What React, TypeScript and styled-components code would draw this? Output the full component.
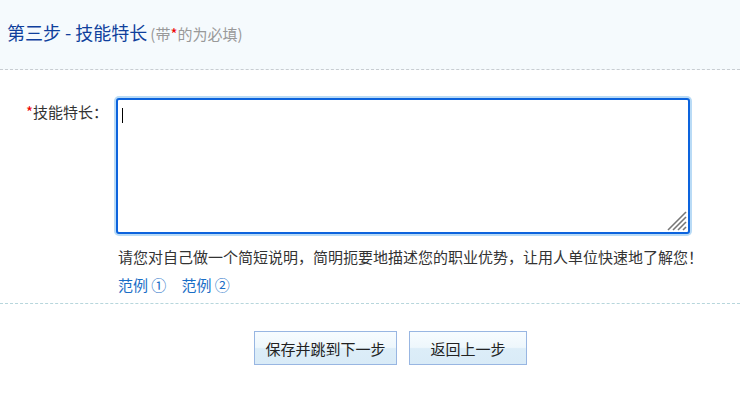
import React from "react";
import styled, { createGlobalStyle } from "styled-components";

const Global = createGlobalStyle`
  html, body { margin: 0; padding: 0; background: #fff; }
  body {
    font-family: "Noto Sans CJK SC", "Noto Sans", sans-serif;
    color: #333;
    text-spacing-trim: space-all;
  }
`;

const Page = styled.div`
  width: 740px;
  height: 407px;
  overflow: hidden;
  background: #fff;
`;

const Header = styled.div`
  height: 70px;
  background: #f5fafd;
  border-bottom: 1px dashed #c8cdd2;
  display: flex;
  align-items: center;
  padding-left: 7px;
  padding-bottom: 4px;
  box-sizing: border-box;
`;

const Title = styled.h2`
  margin: 0;
  font-size: 18px;
  font-weight: normal;
  color: #0f3f9c;
  line-height: 24px;
`;

const Note = styled.span`
  font-size: 15px;
  color: #999;
  margin-left: 3px;
`;

const Star = styled.span`
  color: #e00;
`;

const Form = styled.div`
  padding-top: 26px;
  border-bottom: 1px dashed #b7d6dc;
  padding-bottom: 8px;
`;

const Row = styled.div`
  display: flex;
  align-items: flex-start;
`;

const Label = styled.label`
  flex: none;
  width: 116px;
  box-sizing: border-box;
  padding: 6px 8px 0 0;
  text-align: right;
  font-size: 15px;
  line-height: 20px;
  color: #333;
`;

const Field = styled.div`
  display: flex;
  flex-direction: column;
  padding-top: 2px;
`;

const AreaBox = styled.div`
  position: relative;
  width: 574px;
  height: 136px;
`;

const Area = styled.textarea`
  display: block;
  width: 574px;
  height: 136px;
  box-sizing: border-box;
  border: 2px solid #0c63dd;
  border-radius: 3px;
  box-shadow: 0 0 0 2px #b9dbf6;
  outline: none;
  padding: 6px 5px;
  font-size: 15px;
  font-family: "Noto Sans CJK SC", sans-serif;
  color: #000;
  caret-color: transparent;
  resize: none;
`;

const Caret = styled.span`
  position: absolute;
  left: 6px;
  top: 10px;
  width: 1px;
  height: 15px;
  background: #000;
  pointer-events: none;
`;

const Grip = styled.svg`
  position: absolute;
  right: 3px;
  bottom: 3px;
  pointer-events: none;
`;

const Hint = styled.p`
  margin: 13px 0 0 2px;
  font-size: 15px;
  line-height: 20px;
  color: #333;
`;

const Links = styled.div`
  display: flex;
  gap: 15px;
  margin: 8px 0 0 2px;
`;

const Example = styled.a`
  font-size: 15px;
  line-height: 20px;
  color: #1a6ec6;
  text-decoration: none;
  cursor: pointer;
`;

const Actions = styled.div`
  display: flex;
  gap: 12px;
  padding: 27px 0 0 254px;
`;

const Button = styled.button<{ $w: number }>`
  width: ${(p) => p.$w}px;
  height: 34px;
  box-sizing: border-box;
  border: 1px solid #98b6e2;
  background: linear-gradient(to bottom, #f7fcff 0%, #eef7fc 48%, #dcedf8 52%, #d9ebf7 100%);
  font-family: "Noto Sans CJK SC", sans-serif;
  font-size: 15px;
  color: #222;
  padding: 0;
  cursor: pointer;
`;

export default function App() {
  return (
    <Page>
      <Global />
      <Header>
        <Title>
          第三步 - 技能特长
          <Note>
            (带<Star>*</Star>的为必填)
          </Note>
        </Title>
      </Header>
      <Form>
        <Row>
          <Label htmlFor="skill">
            <Star>*</Star>技能特长：
          </Label>
          <Field>
            <AreaBox>
              <Area id="skill" autoFocus />
              <Caret />
              <Grip width="20" height="20" viewBox="0 0 20 20">
                <g stroke="#777" strokeWidth="1.6">
                  <line x1="1" y1="19" x2="19" y2="1" />
                  <line x1="6" y1="19" x2="19" y2="6" />
                  <line x1="11" y1="19" x2="19" y2="11" />
                  <line x1="16" y1="19" x2="19" y2="16" />
                </g>
              </Grip>
            </AreaBox>
            <Hint>请您对自己做一个简短说明，简明扼要地描述您的职业优势，让用人单位快速地了解您！</Hint>
            <Links>
              <Example>范例 ①</Example>
              <Example>范例 ②</Example>
            </Links>
          </Field>
        </Row>
      </Form>
      <Actions>
        <Button $w={143}>保存并跳到下一步</Button>
        <Button $w={118}>返回上一步</Button>
      </Actions>
    </Page>
  );
}
